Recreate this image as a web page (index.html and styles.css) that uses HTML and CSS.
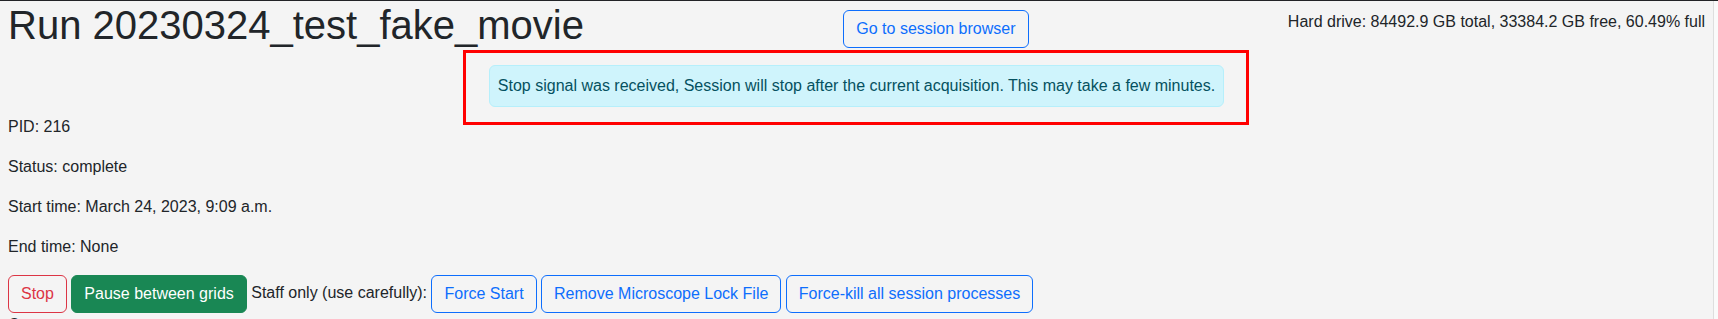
FILE: index.html
```html
<!DOCTYPE html>
<html lang="en">
<head>
<meta charset="utf-8">
<title>Run 20230324_test_fake_movie</title>
<link rel="stylesheet" href="styles.css">
</head>
<body>
<div class="window">
  <main class="page">
    <header class="top-row">
      <h1 class="run-title">Run 20230324_test_fake_movie</h1>
      <a class="btn btn-outline-primary nav-btn" href="#">Go to session browser</a>
      <span class="disk">Hard drive: 84492.9 GB total, 33384.2 GB free, 60.49% full</span>
    </header>

    <div class="alert-row">
      <div class="alert-wrap">
        <div class="alert alert-info">Stop signal was received, Session will stop after the current acquisition. This may take a few minutes.</div>
        <span class="annotation"></span>
      </div>
    </div>

    <p class="info">PID: 216</p>
    <p class="info">Status: complete</p>
    <p class="info">Start time: March 24, 2023, 9:09 a.m.</p>
    <p class="info">End time: None</p>

    <div class="actions">
      <a class="btn btn-outline-danger" href="#">Stop</a>
      <a class="btn btn-success" href="#">Pause between grids</a>
      <span class="staff-label">Staff only (use carefully):</span>
      <a class="btn btn-outline-primary" href="#">Force Start</a>
      <a class="btn btn-outline-primary" href="#">Remove Microscope Lock File</a>
      <a class="btn btn-outline-primary" href="#">Force-kill all session processes</a>
    </div>

    <p class="info next">Comments</p>
  </main>
  <div class="scrollbar"></div>
</div>
</body>
</html>
```

FILE: styles.css
```css
html, body {
  margin: 0;
  padding: 0;
  overflow: hidden;
  background: #f4f4f4;
}

body {
  font-family: "Liberation Sans", Arial, Helvetica, sans-serif;
  font-size: 16px;
  line-height: 24px;
  color: #212529;
}

.window {
  display: flex;
  min-height: 100vh;
  border-top: 1px solid #222326;
  box-sizing: border-box;
}

.page {
  flex: 1;
  min-width: 0;
  padding: 0 8px;
}

.scrollbar {
  width: 4px;
  flex: 0 0 4px;
  background: #fafafa;
  border-left: 1px solid #dedede;
}

/* header row */
.top-row {
  display: flex;
  justify-content: space-between;
  align-items: flex-start;
}

.run-title {
  margin: 0;
  font-size: 40px;
  line-height: 48px;
  font-weight: 400;
  color: #212529;
}

.nav-btn {
  margin-top: 9px;
}

.disk {
  margin-top: 9px;
  white-space: nowrap;
}

/* buttons */
.btn {
  display: inline-block;
  box-sizing: border-box;
  padding: 6px 12px;
  font-size: 16px;
  line-height: 24px;
  border: 1px solid transparent;
  border-radius: 6px;
  text-decoration: none;
  white-space: nowrap;
  background: transparent;
}

.btn-outline-primary {
  color: #0d6efd;
  border-color: #0d6efd;
}

.btn-outline-danger {
  color: #dc3545;
  border-color: #dc3545;
}

.btn-success {
  color: #fff;
  background: #198754;
  border-color: #198754;
}

/* alert */
.alert-row {
  display: flex;
  justify-content: center;
  margin-top: 16px;
  margin-bottom: 8px;
}

.alert-wrap {
  position: relative;
}

.alert {
  padding: 8px;
  border: 1px solid transparent;
  border-radius: 6px;
}

.alert-info {
  color: #055160;
  background: #cff4fc;
  border-color: #b6effb;
}

.annotation {
  position: absolute;
  left: -26px;
  right: -25px;
  top: -15px;
  bottom: -18px;
  border: 3px solid #ff0000;
  pointer-events: none;
}

/* info lines */
.info {
  margin: 0 0 16px;
}

/* action row */
.actions {
  display: flex;
  align-items: center;
  gap: 4.45px;
  height: 38px;
}

.staff-label {
  margin-bottom: 3px;
  white-space: nowrap;
}

.next {
  margin-top: 0;
}
```
